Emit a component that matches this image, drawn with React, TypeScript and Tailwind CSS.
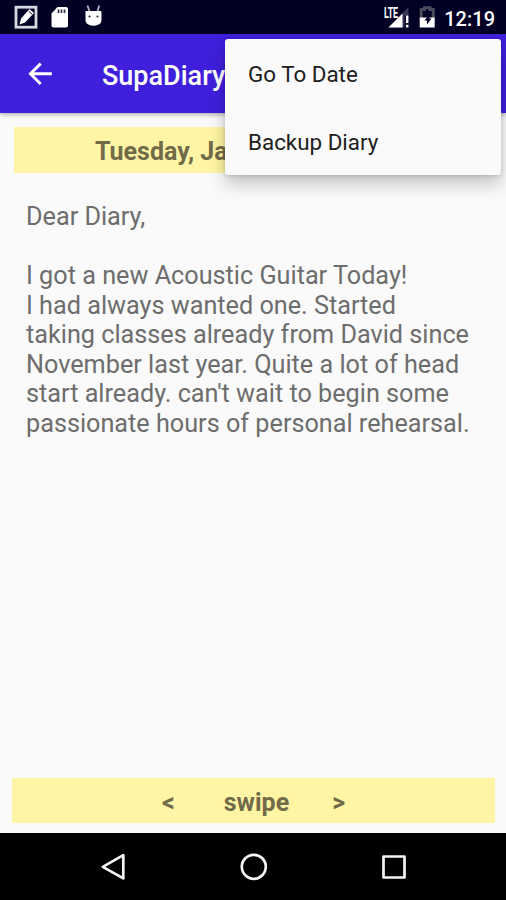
import React from 'react';

const menuItems = ['Go To Date', 'Backup Diary'];

const entry = [
  'Dear Diary,',
  '',
  'I got a new Acoustic Guitar Today!',
  'I had always wanted one. Started',
  'taking classes already from David since',
  'November last year. Quite a lot of head',
  "start already. can't wait to begin some",
  'passionate hours of personal rehearsal.',
];

function StatusBar() {
  return (
    <div className="flex h-[34px] items-center justify-between bg-[#020024] pl-3.5 pr-[11px] text-white">
      <div className="flex items-center">
        <svg width="24" height="24" viewBox="0 0 24 24" fill="none">
          <rect x="2" y="2.2" width="20" height="20" stroke="#d8d8e0" strokeWidth="2.8" />
          <path d="M5.5 19.5l1.5-6L15.5 4l4.5 4-9 9.5z" fill="#fff" />
          <path d="M14.5 6l3.7 3.3" stroke="#020024" strokeWidth="0.9" />
        </svg>
        <svg className="ml-3" width="20" height="24" viewBox="0 0 20 24">
          <path d="M7.5 2H16a2 2 0 0 1 2 2v16.5a2 2 0 0 1-2 2H3.5a2 2 0 0 1-2-2V8.5z" fill="#fff" />
          <path d="M8.5 4.5V8M11.5 4.5V8M14.5 4.5V8" stroke="#33334a" strokeWidth="1.7" />
        </svg>
        <svg className="ml-[13px]" width="22" height="24" viewBox="0 0 22 24">
          <path d="M4.5 0.5l2 6M16.2 0.5l-1.7 6" stroke="#b9b9c4" strokeWidth="1.7" />
          <path d="M2.5 7q0-1 1-1h14q1 0 1 1v8q0 3-3 4.5-5 2.5-10 0-3-1.5-3-4.5z" fill="#fff" />
          <circle cx="6.5" cy="11.5" r="1.1" fill="#33334a" />
          <circle cx="14.5" cy="11.5" r="1.1" fill="#33334a" />
        </svg>
      </div>
      <div className="flex items-center">
        <div className="relative h-[26px] w-7">
          <svg className="absolute left-0 top-0" width="28" height="26" viewBox="0 0 28 26">
            <path d="M26.5 3v8.500h-4V23.500H6.500z" fill="#4b4a61" opacity=".75" />
            <path d="M20.5 9.500V23.500H6.500z" fill="#fff" />
            <path d="M25.2 11.500v7.500M25.200 20.800v2.700" stroke="#fff" strokeWidth="2.5" />
          </svg>
          <span className="absolute left-[2px] top-[2px] origin-left scale-x-[0.64] text-[14px] font-bold leading-none tracking-tight">
            LTE
          </span>
        </div>
        <svg className="ml-[8px]" width="18" height="24" viewBox="0 0 18 24">
          <path d="M3.2 13V4.500h3.300V2.700h5.500v1.800h3.300V13" fill="none" stroke="#4d4a5c" strokeWidth="3" />
          <path d="M1.700 12.500h15v10h-15z" fill="#fff" />
          <path d="M11.500 9l-5 6.500h2.500v4l4.500-6h-2z" fill="#020024" />
        </svg>
        <span className="ml-[8px] pt-[3px] text-[20px] font-medium leading-none">12:19</span>
      </div>
    </div>
  );
}

function AppBar() {
  return (
    <div className="relative flex h-[79px] items-center bg-[#401fdc] pl-7 text-white shadow-[0_2px_4px_rgba(0,0,0,0.28)]">
      <svg width="24" height="24" viewBox="0 0 24 24" fill="none" stroke="#fff" strokeWidth="2.9">
        <path d="M23.8 11.8H2.5M12.7 1.600L2.400 11.800 12.700 22" />
      </svg>
      <h1 className="ml-[50px] pt-1 text-[27px] font-medium leading-8">SupaDiary</h1>
    </div>
  );
}

function OverflowMenu() {
  return (
    <div className="absolute left-[225px] top-[39px] flex h-[136px] w-[276px] flex-col rounded-[3px] bg-[#fafafa] shadow-[0_9px_18px_rgba(0,0,0,0.22),0_1px_4px_rgba(0,0,0,0.14)]">
      {menuItems.map((item) => (
        <button key={item} className="flex flex-1 items-center pl-[23px] pt-1 text-left text-[22.4px] text-[#202020]">
          {item}
        </button>
      ))}
    </div>
  );
}

function NavBar() {
  return (
    <div className="flex h-[67px] items-center justify-between bg-black pl-[100px] pr-[99px]">
      <svg width="28" height="30" viewBox="0 0 28 30" fill="none" stroke="#f4f4f4" strokeWidth="2.7" strokeLinejoin="round">
        <path d="M23.3 3.200v23.200L2.800 14.800z" />
      </svg>
      <svg width="30" height="30" viewBox="0 0 30 30" fill="none" stroke="#f4f4f4" strokeWidth="2.7">
        <circle cx="13.8" cy="14.8" r="12" />
      </svg>
      <svg width="26" height="26" viewBox="0 0 26 26" fill="none" stroke="#f4f4f4" strokeWidth="2.7" strokeLinejoin="round">
        <rect x="2.5" y="2.5" width="21" height="21" />
      </svg>
    </div>
  );
}

export default function App() {
  return (
    <div className="relative flex h-[900px] w-[506px] flex-col overflow-hidden bg-[#fafafa] font-['Roboto',sans-serif]">
      <StatusBar />
      <AppBar />
      <main className="flex flex-1 flex-col pb-[10px] pt-3.5">
        <div className="ml-3.5 mr-[10px] flex h-[46px] items-center bg-[#fff5a4] pl-[81px] pt-[3px] text-[25px] font-bold text-[#716b49]">
          Tuesday, Ja
        </div>
        <div className="ml-[26px] mt-[29px] text-[25.22px] leading-[29.5px] text-[#6d6d6d]">
          {entry.map((line, i) => (
            <p key={i} className="h-[29.5px] whitespace-nowrap">{line}</p>
          ))}
        </div>
        <div className="ml-3 mr-[11px] mt-auto flex h-[45px] items-center bg-[#fff5a4] pl-[150px] pt-1 text-[25px] font-bold text-[#716b49]">
          <span>&lt;</span>
          <span className="ml-[49px]">swipe</span>
          <span className="ml-[43px]">&gt;</span>
        </div>
      </main>
      <NavBar />
      <OverflowMenu />
    </div>
  );
}
